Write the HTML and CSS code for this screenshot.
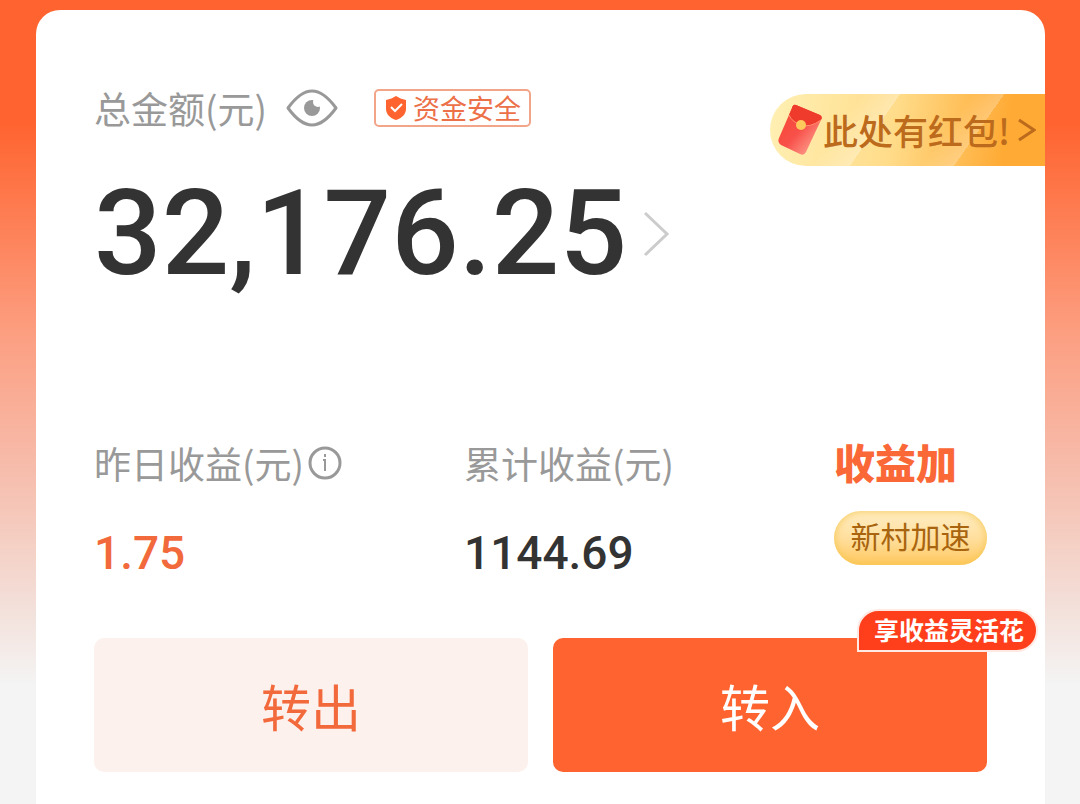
FILE: index.html
```html
<!DOCTYPE html>
<html lang="zh-CN">
<head>
    <meta charset="UTF-8">
    <meta name="viewport" content="width=device-width, initial-scale=1.0">
    <title>总金额</title>
    <link rel="stylesheet" href="styles.css">
</head>
<body>
    <main class="card">
        <section class="summary">
            <div class="balance">
                <div class="balance-head">
                    <h1 class="label">总金额(元)</h1>
                    <button class="icon-button" type="button" aria-label="隐藏金额">
                        <svg width="52" height="40" viewBox="0 0 52 40">
                            <path d="M2 20C10 9 17 3 26 3s16 6 24 17c-8 11-15 17-24 17S10 31 2 20z" fill="none" stroke="#999" stroke-width="3" stroke-linejoin="round"/>
                            <circle cx="26" cy="20" r="8" fill="#999"/>
                            <circle cx="32" cy="14" r="5" fill="#fff"/>
                        </svg>
                    </button>
                    <a class="safe-tag" href="#">
                        <svg width="22" height="24" viewBox="0 0 22 24">
                            <path d="M11 0c3 2 6 3 10 4v9c0 5-4 9-10 11C5 22 1 18 1 13V4c4-1 7-2 10-4z" fill="#ff6430"/>
                            <path d="M6 11l4 4 7-7" fill="none" stroke="#fff" stroke-width="2"/>
                        </svg>
                        资金安全
                    </a>
                </div>
                <a class="amount" href="#">
                    32,176.25
                    <svg width="28" height="48" viewBox="0 0 28 48">
                        <path d="M2 3l22 21L2 45" fill="none" stroke="#ccc" stroke-width="3"/>
                    </svg>
                </a>
            </div>
            <a class="ribbon" href="#">
                <svg width="46" height="52" viewBox="0 0 46 52">
                    <defs>
                        <linearGradient id="packet" x1="0" y1="0" x2="1" y2="1">
                            <stop offset="0" stop-color="#f5472f"/>
                            <stop offset="0.5" stop-color="#f8504a"/>
                            <stop offset="1" stop-color="#ffb9a4"/>
                        </linearGradient>
                    </defs>
                    <path d="M19 1l24 10q3 2 1 5L29 48q-2 4-6 2L4 41q-4-3-2-7L15 4q1-4 4-3z" fill="url(#packet)"/>
                    <path d="M19 1l24 10q3 2 1 5-10 8-20 5-9-3-12-10l3-7q1-4 4-3z" fill="#ee3b2c"/>
                    <path d="M12 11q3 7 12 10t20-5" fill="none" stroke="#ff9370" stroke-width="1"/>
                    <circle cx="24" cy="21" r="5" fill="#ffc95c"/>
                </svg>
                <span>此处有红包!</span>
                <svg width="18" height="24" viewBox="0 0 18 24">
                    <path d="M1 2l15 10L1 22" fill="none" stroke="#bc6a1c" stroke-width="3"/>
                </svg>
            </a>
        </section>

        <section class="stats">
            <div class="stat">
                <h2 class="label">
                    昨日收益(元)
                    <button class="icon-button" type="button" aria-label="收益说明">
                        <svg width="34" height="34" viewBox="0 0 34 34">
                            <circle cx="17" cy="17" r="15" fill="none" stroke="#999" stroke-width="3"/>
                            <path d="M15 14h2v11M17 8v3" fill="none" stroke="#999" stroke-width="2"/>
                        </svg>
                    </button>
                </h2>
                <p class="value value-orange">1.75</p>
            </div>
            <div class="stat">
                <h2 class="label">累计收益(元)</h2>
                <p class="value">1144.69</p>
            </div>
            <div class="stat">
                <h2 class="boost-title">收益加</h2>
                <a class="boost-pill" href="#">新村加速</a>
            </div>
        </section>

        <section class="actions">
            <button class="action action-out" type="button">转出</button>
            <div class="action-wrap">
                <button class="action action-in" type="button">转入</button>
                <span class="badge">享收益灵活花</span>
            </div>
        </section>
    </main>
</body>
</html>
```
FILE: styles.css
```css
* {
    box-sizing: border-box;
}

body {
    margin: 0;
    padding: 10px 35px 0 36px;
    min-height: 100vh;
    font-family: "Noto Sans CJK SC", sans-serif;
    background: #f4f4f4 linear-gradient(#ff6430 125px, #fca083 340px, #f6bfaf 480px, #f3ded7 600px, #f4f4f4 685px) no-repeat;
}

h1, h2, p {
    margin: 0;
    font-weight: 400;
}

a {
    color: inherit;
    text-decoration: none;
}

button {
    border: none;
    padding: 0;
    font-family: inherit;
    cursor: pointer;
}

svg {
    display: block;
    flex: none;
}

.card {
    min-height: calc(100vh - 10px);
    padding: 76px 58px 32px;
    background: #fff;
    border-radius: 24px 24px 0 0;
}

.summary {
    display: flex;
    justify-content: space-between;
    align-items: flex-start;
}

.balance-head {
    display: flex;
    align-items: center;
    height: 44px;
}

.label {
    display: flex;
    align-items: center;
    gap: 4px;
    height: 44px;
    font-size: 37px;
    line-height: 42px;
    color: #999;
    white-space: nowrap;
}

.icon-button {
    background: none;
}

.balance-head .icon-button {
    margin: 0 36px 0 19px;
}

.safe-tag {
    display: flex;
    align-items: center;
    gap: 6px;
    height: 38px;
    padding: 0 8px 0 9px;
    border: 2px solid #f3a58a;
    border-radius: 5px;
    font-size: 27px;
    line-height: 34px;
    color: #ec7048;
    white-space: nowrap;
}

.amount {
    display: flex;
    align-items: center;
    gap: 16px;
    margin-top: 32px;
    font-family: Roboto, sans-serif;
    font-size: 119px;
    font-weight: 500;
    line-height: 144px;
    color: #333;
}

.ribbon {
    display: flex;
    align-items: center;
    height: 72px;
    margin: 8px -58px 0 0;
    padding: 0 9px 0 7px;
    border-radius: 36px 0 0 36px;
    background:
        linear-gradient(125deg, transparent 28%, rgba(255, 255, 255, 0.3) 40%, transparent 40%, transparent 62%, rgba(255, 255, 255, 0.25) 72%, transparent 72%),
        linear-gradient(100deg, #fff0b4, #ffdc8a 45%, #ffaa34 85%);
    font-size: 35px;
    font-weight: 500;
    line-height: 44px;
    color: #bc6a1c;
    white-space: nowrap;
}

.ribbon span {
    margin-right: 8px;
}

.stats {
    display: grid;
    grid-template-columns: 1fr 1fr 153px;
    margin-top: 135px;
}

.value {
    margin-top: 40px;
    font-family: Roboto, sans-serif;
    font-size: 46px;
    font-weight: 500;
    line-height: 56px;
    color: #333;
}

.value-orange {
    color: #f26a3c;
}

.boost-title {
    font-size: 41px;
    font-weight: 900;
    line-height: 40px;
    color: #fb6838;
}

.boost-pill {
    display: block;
    height: 54px;
    margin-top: 30px;
    border-radius: 27px;
    background: linear-gradient(#ffeec5, #ffdf9e 50%, #ffc860);
    box-shadow: inset 0 0 8px #f5c64f;
    font-size: 30px;
    line-height: 48px;
    text-align: center;
    color: #a8640e;
}

.actions {
    display: grid;
    grid-template-columns: 1fr 1fr;
    gap: 25px;
    margin-top: 57px;
}

.action-wrap {
    position: relative;
}

.action {
    display: block;
    width: 100%;
    height: 134px;
    border-radius: 10px;
    font-size: 50px;
    line-height: 60px;
}

.action-out {
    background: #fdf1ed;
    color: #f26a3c;
}

.action-in {
    background: #ff6430;
    color: #fff;
}

/* Sits over the top right corner of the button */
.badge {
    position: absolute;
    top: -29px;
    right: -51px;
    height: 43px;
    padding: 0 12px 0 15px;
    border: 2px solid #ffe9e2;
    border-radius: 22px 22px 22px 0;
    background: #ff3f1c;
    font-size: 25px;
    font-weight: 700;
    line-height: 36px;
    color: #fff;
    white-space: nowrap;
}
```
